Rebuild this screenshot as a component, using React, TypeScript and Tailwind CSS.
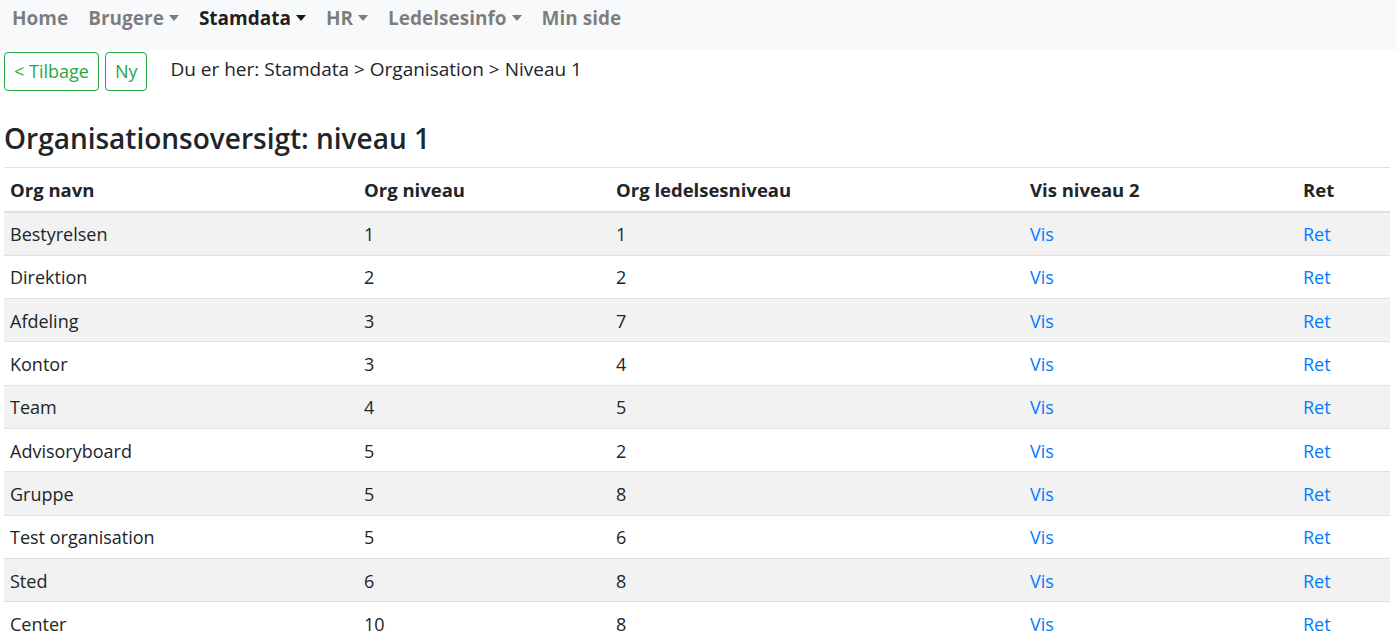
const NAV = [
  { label: "Home", caret: false, active: false },
  { label: "Brugere", caret: true, active: false },
  { label: "Stamdata", caret: true, active: true },
  { label: "HR", caret: true, active: false },
  { label: "Ledelsesinfo", caret: true, active: false },
  { label: "Min side", caret: false, active: false },
];

const ROWS: [string, number, number][] = [
  ["Bestyrelsen", 1, 1],
  ["Direktion", 2, 2],
  ["Afdeling", 3, 7],
  ["Kontor", 3, 4],
  ["Team", 4, 5],
  ["Advisoryboard", 5, 2],
  ["Gruppe", 5, 8],
  ["Test organisation", 5, 6],
  ["Sted", 6, 8],
  ["Center", 10, 8],
];

function Caret() {
  return (
    <span className="ml-[5px] inline-block h-0 w-0 border-x-[5px] border-t-[6px] border-x-transparent border-t-current align-middle" />
  );
}

export default function App() {
  return (
    <div className="min-h-screen bg-white text-[#212529] font-['Open_Sans',sans-serif] text-[18px]">
      <nav className="h-[50px] bg-[#f8f9fa] flex items-start pt-[5px] pl-[2px]">
        {NAV.map((n) => (
          <a
            key={n.label}
            className={
              "px-[10px] text-[19px] font-bold leading-[26px] flex items-center " +
              (n.active ? "text-black/90" : "text-black/50")
            }
          >
            {n.label}
            {n.caret && <Caret />}
          </a>
        ))}
      </nav>

      <div className="px-[4px]">
        <div className="flex items-start pt-[2px]">
          <button className="h-[39px] px-[9px] border border-[#28a745] rounded-[4px] text-[#28a745] text-[18px]">
            &lt; Tilbage
          </button>
          <button className="ml-[6px] h-[39px] px-[9px] border border-[#28a745] rounded-[4px] text-[#28a745] text-[18px]">
            Ny
          </button>
          <div className="ml-[23px] mt-[4px] text-[19px] leading-[26px]">
            Du er her: Stamdata &gt; Organisation &gt; Niveau 1
          </div>
        </div>

        <h3 className="mt-[30px] text-[28px] font-semibold leading-[34px]">
          Organisationsoversigt: niveau 1
        </h3>
        <div className="mt-[12px] border-t border-[#dee2e6] w-[1386px]" />

        <table className="w-[1386px] table-fixed border-collapse text-[18px]">
          <colgroup>
            <col className="w-[354px]" />
            <col className="w-[252px]" />
            <col className="w-[414px]" />
            <col className="w-[273px]" />
            <col className="w-[93px]" />
          </colgroup>
          <thead>
            <tr className="h-[44px] border-b-2 border-[#dee2e6]">
              {["Org navn", "Org niveau", "Org ledelsesniveau", "Vis niveau 2", "Ret"].map((h) => (
                <th key={h} className="px-[6px] pt-[1px] text-left font-bold text-[18.5px]">
                  {h}
                </th>
              ))}
            </tr>
          </thead>
          <tbody>
            {ROWS.map(([name, lvl, led], i) => (
              <tr
                key={name}
                className={"h-[43.33px] border-t border-[#dee2e6] " + (i % 2 === 0 ? "bg-[#f2f2f2]" : "bg-white")}
              >
                <td className="px-[6px] pt-[2px]">{name}</td>
                <td className="px-[6px] pt-[2px]">{lvl}</td>
                <td className="px-[6px] pt-[2px]">{led}</td>
                <td className="px-[6px] pt-[2px] text-[#007bff]">Vis</td>
                <td className="px-[6px] pt-[2px] text-[#007bff]">Ret</td>
              </tr>
            ))}
          </tbody>
        </table>
      </div>
    </div>
  );
}
